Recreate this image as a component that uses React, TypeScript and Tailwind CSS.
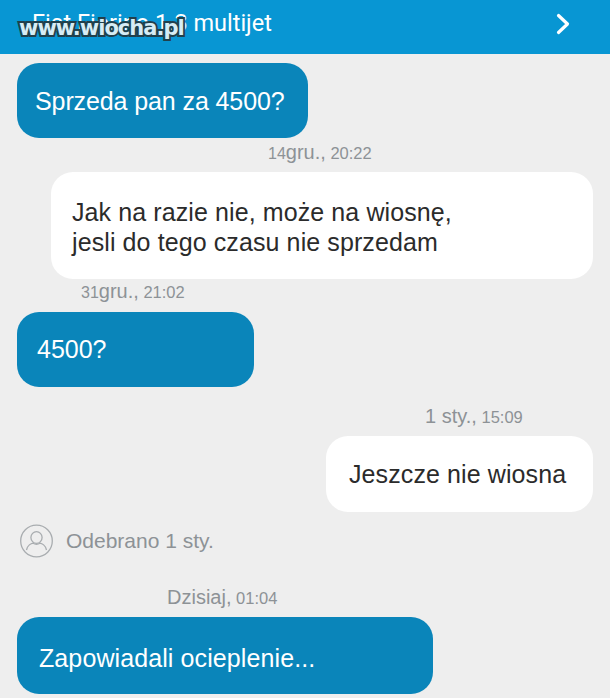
function Stamp({ num, day, time, className }: { num?: string; day: string; time: string; className: string }) {
  return (
    <div className={`h-6 whitespace-nowrap leading-6 text-[#8d9296] ${className}`}>
      {num && <span className="text-[16px]">{num}</span>}
      <span className="text-[20px]">{day}</span>
      <span className="text-[16.5px]"> {time}</span>
    </div>
  )
}

function Bubble({ mine, className, children }: { mine?: boolean; className: string; children: React.ReactNode }) {
  const tone = mine ? "bg-white text-[#2b2b2b] tracking-[0.1px]" : "bg-[#0a85ba] text-white"
  return (
    <div className={`flex items-center rounded-[22px] text-[25px] ${tone} ${className}`}>
      {children}
    </div>
  )
}

export default function App() {
  return (
    <div className="relative flex h-[698px] w-[610px] flex-col overflow-hidden bg-[#eeeeee] font-['Liberation_Sans',sans-serif]">
      {/* Top bar */}
      <header className="flex h-[54px] shrink-0 items-center justify-between bg-[#0896d3] pl-[32px] pr-[40px] pb-[6px] text-white">
        <span className="font-['Roboto',sans-serif] text-[23.5px]">Fiat Fiorino 1.3 multijet</span>
        <svg width="14" height="22" viewBox="0 0 14 22" fill="none" stroke="currentColor" strokeWidth="3.2" strokeLinecap="round" strokeLinejoin="round">
          <path d="M2.5 2.5 11.5 11 2.5 19.5" />
        </svg>
      </header>

      {/* Site watermark */}
      <div className="absolute left-[19px] top-[16px] font-['DejaVu_Sans',sans-serif] text-[21px] font-bold leading-6 tracking-[-1px] text-[#d6ecf5] [-webkit-text-stroke:4px_#20404c] [paint-order:stroke_fill]">
        www.wiocha.pl
      </div>

      {/* Conversation */}
      <main className="flex flex-col px-[17px] pt-[9px]">
        <Bubble className="h-[75px] w-[291px] pl-[18px] pt-[2px] tracking-[-0.1px]">Sprzeda pan za 4500?</Bubble>
        <Stamp num="14" day="gru.," time="20:22" className="mt-[2px] ml-[251px]" />

        <Bubble mine className="mt-[8px] ml-[34px] h-[107px] w-[542px] pl-[21px] pt-[2px] leading-[30px]">
          <div>
            Jak na razie nie, może na wiosnę,
            <br />
            jesli do tego czasu nie sprzedam
          </div>
        </Bubble>
        <Stamp num="31" day="gru.," time="21:02" className="ml-[64px]" />

        <Bubble className="mt-[9px] h-[75px] w-[237px] pl-[20px]">4500?</Bubble>
        <Stamp day="1 sty.," time="15:09" className="mt-[17px] ml-[408px]" />

        <Bubble mine className="mt-[8px] ml-[309px] h-[76px] w-[267px] pl-[23px] pt-[2px]">Jeszcze nie wiosna</Bubble>

        {/* Read receipt */}
        <div className="mt-[12px] ml-[3px] flex items-center gap-[13px]">
          <svg width="33" height="34" viewBox="0 0 33 34" fill="none" stroke="#a9adb0" strokeWidth="1.3">
            <circle cx="16.5" cy="17" r="15.8" />
            <ellipse cx="16.5" cy="13.5" rx="5.6" ry="5.8" />
            <path d="M6.5 26c1-4.5 4.5-6.5 6.5-6.8 2 1.2 5 1.2 7 0 2 .3 5.5 2.3 6.5 6.8" />
          </svg>
          <span className="text-[21px] text-[#8d9296]">Odebrano 1 sty.</span>
        </div>

        <Stamp day="Dzisiaj," time="01:04" className="mt-[27px] ml-[150px]" />
        <Bubble className="mt-[8px] h-[77px] w-[416px] pl-[22px] pt-[6px] tracking-[0.1px]">Zapowiadali ocieplenie...</Bubble>
      </main>
    </div>
  )
}
